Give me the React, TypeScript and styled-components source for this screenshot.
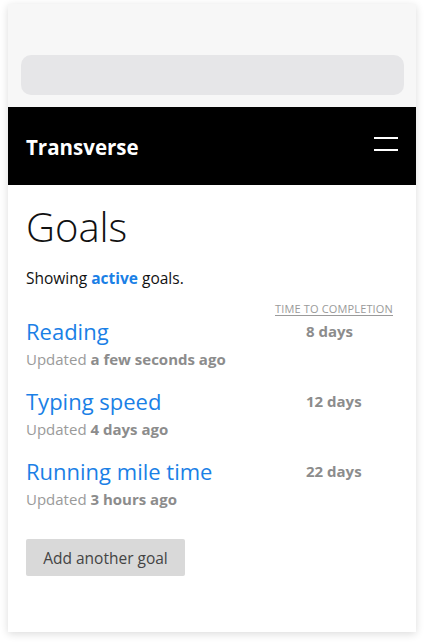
import React from "react";
import styled, { createGlobalStyle } from "styled-components";

const Global = createGlobalStyle`
  html, body { margin: 0; padding: 0; background: #ffffff; }
  body { font-family: "Open Sans", Lato, sans-serif; }
  * { box-sizing: border-box; }
`;

const Page = styled.div`
  padding: 4px 8px 12px 8px;
`;

const Card = styled.div`
  width: 408px;
  height: 628px;
  background: #ffffff;
  box-shadow: 0 2px 8px rgba(0, 0, 0, 0.14);
  display: flex;
  flex-direction: column;
`;

const Chrome = styled.div`
  height: 103px;
  background: #f7f7f7;
  padding: 51px 12px 0 13px;
`;

const AddressBar = styled.div`
  height: 40px;
  border-radius: 10px;
  background: #e6e6e8;
`;

const Header = styled.header`
  height: 78px;
  background: #000000;
  display: flex;
  align-items: center;
  justify-content: space-between;
  padding: 0 18px 0 18px;
`;

const Brand = styled.div`
  color: #ffffff;
  font-size: 20.5px;
  font-weight: 700;
  margin-top: 2px;
`;

const Burger = styled.div`
  width: 24px;
  display: flex;
  flex-direction: column;
  gap: 10px;
  margin-top: -4px;
  span {
    display: block;
    height: 2px;
    background: #ffffff;
  }
`;

const Content = styled.main`
  padding: 18px 18px 0 18px;
  display: flex;
  flex-direction: column;
`;

const Title = styled.h1`
  margin: 0;
  font-size: 40px;
  font-weight: 300;
  color: #111;
  line-height: 48px;
`;

const Intro = styled.p`
  margin: 17px 0 0 0;
  font-size: 15.5px;
  color: #111;
  line-height: 20px;
  strong { color: #1a80e6; font-weight: 700; }
`;

const ColumnHead = styled.div`
  display: flex;
  justify-content: flex-end;
  margin: 14px 0 1px 0;
  padding-right: 5px;
  span {
    font-size: 11px;
    letter-spacing: 0.15px;
    color: #9a9a9a;
    text-transform: uppercase;
    text-decoration: underline;
    text-underline-offset: 2px;
    line-height: 14px;
  }
`;

const GoalList = styled.div`
  display: flex;
  flex-direction: column;
  gap: 14px;
`;

const Goal = styled.div`
  display: grid;
  grid-template-columns: 1fr 92px;
  align-items: start;
  height: 56px;
`;

const GoalMain = styled.div`
  display: flex;
  flex-direction: column;
`;

const GoalName = styled.a`
  color: #1a80e6;
  font-size: 22px;
  line-height: 28px;
  text-decoration: none;
`;

const Updated = styled.div`
  color: #9a9a9a;
  font-size: 15px;
  line-height: 20px;
  margin-top: 4px;
  b { color: #8c8c8c; font-weight: 700; }
`;

const Days = styled.div`
  color: #8c8c8c;
  font-size: 15px;
  font-weight: 700;
  line-height: 28px;
`;

const AddButton = styled.button`
  align-self: flex-start;
  margin-top: 26px;
  width: 159px;
  height: 37px;
  background: #d9d9d9;
  border: none;
  border-radius: 2px;
  color: #444;
  font-family: inherit;
  font-size: 15.5px;
`;

const goals = [
  { name: "Reading", updated: "a few seconds ago", days: "8 days" },
  { name: "Typing speed", updated: "4 days ago", days: "12 days" },
  { name: "Running mile time", updated: "3 hours ago", days: "22 days" },
];

export default function App() {
  return (
    <>
      <Global />
      <Page>
        <Card>
          <Chrome>
            <AddressBar />
          </Chrome>
          <Header>
            <Brand>Transverse</Brand>
            <Burger>
              <span />
              <span />
            </Burger>
          </Header>
          <Content>
            <Title>Goals</Title>
            <Intro>
              Showing <strong>active</strong> goals.
            </Intro>
            <ColumnHead>
              <span>Time to completion</span>
            </ColumnHead>
            <GoalList>
              {goals.map((g) => (
                <Goal key={g.name}>
                  <GoalMain>
                    <GoalName href="#">{g.name}</GoalName>
                    <Updated>
                      Updated <b>{g.updated}</b>
                    </Updated>
                  </GoalMain>
                  <Days>{g.days}</Days>
                </Goal>
              ))}
            </GoalList>
            <AddButton>Add another goal</AddButton>
          </Content>
        </Card>
      </Page>
    </>
  );
}
